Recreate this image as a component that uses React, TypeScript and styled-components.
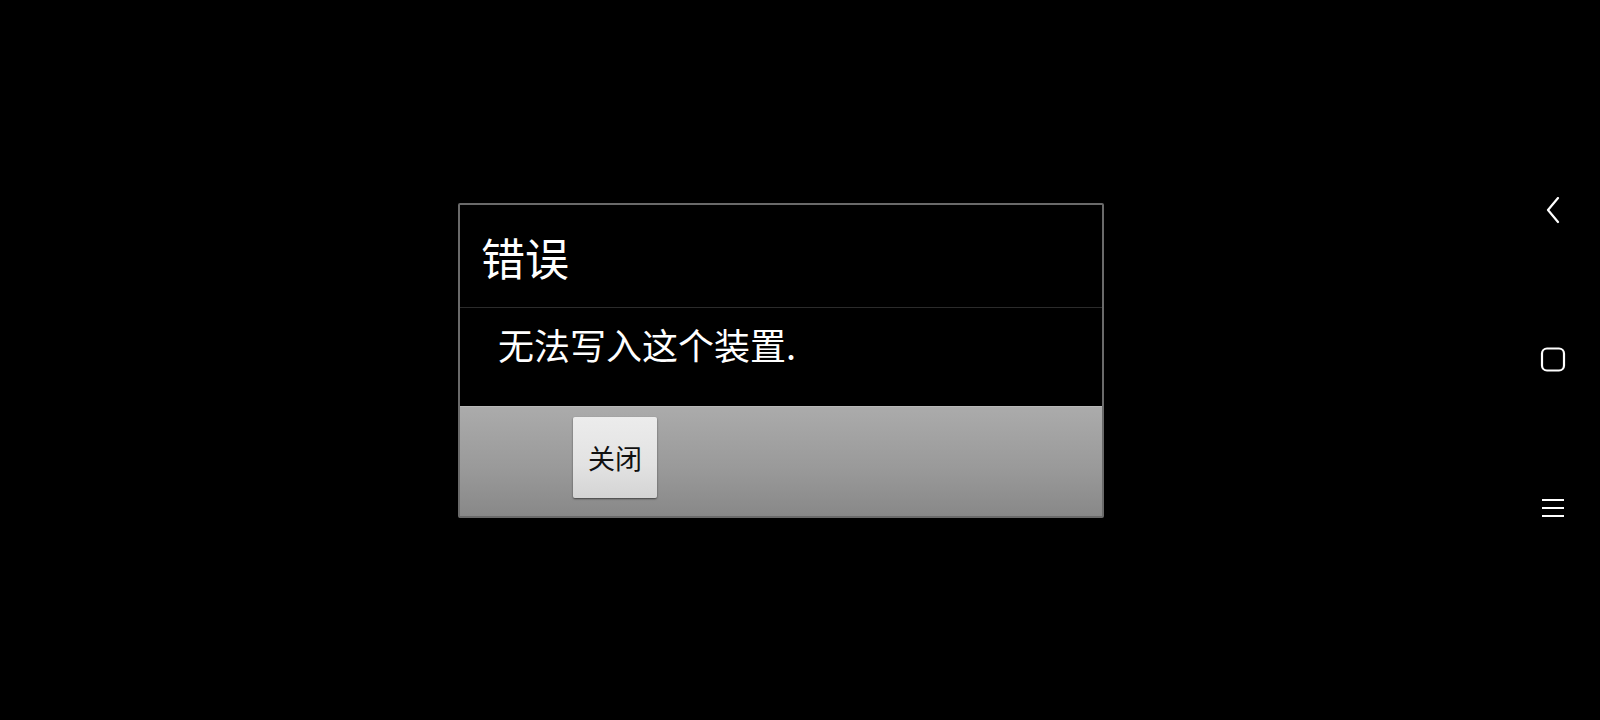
import styled, { createGlobalStyle } from 'styled-components';

const GlobalStyle = createGlobalStyle`
  html, body {
    margin: 0;
    padding: 0;
    background: #000;
  }
  body {
    font-family: 'Noto Sans CJK SC', 'Noto Sans', sans-serif;
  }
`;

function App() {
  return (
    <Screen>
      <GlobalStyle />
      <Main>
        <Dialog>
          <Header>
            <Title>错误</Title>
          </Header>
          <Body>
            <Message>无法写入这个装置.</Message>
          </Body>
          <ButtonBar>
            <CloseBtn>关闭</CloseBtn>
          </ButtonBar>
        </Dialog>
      </Main>
      <NavBar>
        <NavBtn aria-label="back">
          <svg width="18" height="28" viewBox="0 0 18 28" fill="none">
            <path
              d="M14 1 L4 13 L14 25"
              stroke="#fff"
              strokeWidth="2.2"
              strokeLinecap="round"
              strokeLinejoin="round"
            />
          </svg>
        </NavBtn>
        <NavBtn aria-label="home">
          <svg width="26" height="26" viewBox="0 0 26 26" fill="none">
            <rect
              x="2"
              y="1.5"
              width="22"
              height="22"
              rx="5"
              stroke="#fff"
              strokeWidth="2.2"
            />
          </svg>
        </NavBtn>
        <NavBtn aria-label="menu">
          <svg width="26" height="22" viewBox="0 0 26 22" fill="none">
            <path
              d="M2 2 H24 M2 10 H24 M2 18 H24"
              stroke="#fff"
              strokeWidth="2"
            />
          </svg>
        </NavBtn>
      </NavBar>
    </Screen>
  );
}

const Screen = styled.div`
  display: flex;
  width: 1600px;
  height: 720px;
  background: #000;
  overflow: hidden;
`;

const Main = styled.div`
  flex: 1;
  display: flex;
  align-items: center;
  padding-left: 458px;
`;

const Dialog = styled.div`
  display: flex;
  flex-direction: column;
  width: 642px;
  border: 2px solid #6a6a6a;
  border-radius: 2px;
  background: #000;
`;

const Header = styled.div`
  display: flex;
  align-items: center;
  height: 102px;
  padding-left: 21px;
  border-bottom: 1px solid #2b2b2b;
`;

const Title = styled.div`
  color: #fff;
  font-size: 44px;
  line-height: 1;
  padding-top: 2px;
`;

const Body = styled.div`
  height: 98px;
  padding: 11px 0 0 38px;
  box-sizing: border-box;
`;

const Message = styled.div`
  color: #fff;
  font-size: 36px;
  line-height: 50px;
`;

const ButtonBar = styled.div`
  display: flex;
  align-items: flex-start;
  height: 110px;
  padding: 10px 0 0 113px;
  box-sizing: border-box;
  background: linear-gradient(to bottom, #ababab 0%, #9a9a9a 55%, #888 100%);
  border-top: 1px solid #b8b8b8;
`;

const CloseBtn = styled.button`
  display: flex;
  justify-content: center;
  align-items: center;
  width: 84px;
  height: 81px;
  padding: 0;
  border: none;
  border-radius: 2px;
  background: linear-gradient(to bottom, #ececec 0%, #e2e2e2 60%, #d4d4d4 100%);
  box-shadow: 0 1px 2px rgba(0, 0, 0, 0.55);
  color: #111;
  font-family: 'Noto Sans CJK SC', sans-serif;
  font-size: 27px;
`;

const NavBar = styled.div`
  display: flex;
  flex-direction: column;
  align-items: center;
  justify-content: center;
  gap: 115px;
  width: 94px;
`;

const NavBtn = styled.div`
  display: flex;
  justify-content: center;
  align-items: center;
  width: 34px;
  height: 34px;
`;

export default App;
